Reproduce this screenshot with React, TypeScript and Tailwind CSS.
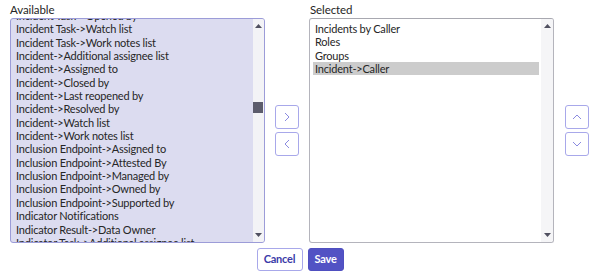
import React from "react";

const available = [
  "Incident Task->Opened by",
  "Incident Task->Watch list",
  "Incident Task->Work notes list",
  "Incident->Additional assignee list",
  "Incident->Assigned to",
  "Incident->Closed by",
  "Incident->Last reopened by",
  "Incident->Resolved by",
  "Incident->Watch list",
  "Incident->Work notes list",
  "Inclusion Endpoint->Assigned to",
  "Inclusion Endpoint->Attested By",
  "Inclusion Endpoint->Managed by",
  "Inclusion Endpoint->Owned by",
  "Inclusion Endpoint->Supported by",
  "Indicator Notifications",
  "Indicator Result->Data Owner",
  "Indicator Task->Additional assignee list",
];

const selected = ["Incidents by Caller", "Roles", "Groups", "Incident->Caller"];

function UpTri() {
  return (
    <svg width="7" height="4" viewBox="0 0 7 4">
      <path d="M0 4 L3.5 0 L7 4 Z" fill="#505060" />
    </svg>
  );
}
function DownTri() {
  return (
    <svg width="7" height="4" viewBox="0 0 7 4">
      <path d="M0 0 L3.5 4 L7 0 Z" fill="#505060" />
    </svg>
  );
}

function Chevron({ dir }: { dir: "left" | "right" | "up" | "down" }) {
  const paths: Record<string, string> = {
    right: "M4 2 L8 6 L4 10",
    left: "M8 2 L4 6 L8 10",
    up: "M2 8 L6 4 L10 8",
    down: "M2 4 L6 8 L10 4",
  };
  return (
    <svg width="12" height="12" viewBox="0 0 12 12" fill="none">
      <path d={paths[dir]} stroke="#8a8ae0" strokeWidth="1" />
    </svg>
  );
}

function IconBtn({ dir }: { dir: "left" | "right" | "up" | "down" }) {
  return (
    <button className="w-[24px] h-[24px] flex items-center justify-center rounded-[3px] border border-[#a8a8ea] bg-white">
      <Chevron dir={dir} />
    </button>
  );
}

export default function App() {
  return (
    <div
      className="w-[602px] h-[274px] bg-white text-[#262626]"
      style={{ fontFamily: "Lato, 'Open Sans', sans-serif" }}
    >
      <div className="flex pl-[10px] pt-[2px]">
        {/* Available */}
        <div className="flex flex-col w-[255px]">
          <div className="text-[11.5px] tracking-[-0.1px] leading-[16px] h-[16px]">Available</div>
          <div className="h-[225px] flex rounded-[3px] border border-[#9c9cd8] bg-[#dcdcf0] overflow-hidden">
            <div className="flex-1 overflow-hidden pl-[5px]">
              <div className="mt-[-10px] text-[11px] tracking-[-0.2px] leading-[13.35px]">
                {available.map((t) => (
                  <div key={t} className="whitespace-nowrap">
                    {t}
                  </div>
                ))}
              </div>
            </div>
            <div className="w-[11px] bg-[#f3f3f6] flex flex-col items-center justify-between py-[5px] relative">
              <UpTri />
              <div className="absolute left-[0px] top-[83px] w-[10px] h-[11px] bg-[#5c5c6c]" />
              <DownTri />
            </div>
          </div>
        </div>

        {/* Move buttons */}
        <div className="flex flex-col justify-center gap-[3px] ml-[10px] mt-[16px]">
          <IconBtn dir="right" />
          <IconBtn dir="left" />
        </div>

        {/* Selected */}
        <div className="flex flex-col w-[245px] ml-[10px]">
          <div className="text-[11.5px] tracking-[-0.1px] leading-[16px] h-[16px] pl-[1px]">Selected</div>
          <div className="h-[225px] flex rounded-[3px] border border-[#b4b4bc] border-t-[#a8a8b0] bg-white overflow-hidden">
            <div className="flex-1 overflow-hidden pl-[3px] pr-[2px] pt-[3px]">
              <div className="text-[11px] tracking-[-0.2px] leading-[13.35px]">
                {selected.map((t, i) => (
                  <div
                    key={t}
                    className={
                      "whitespace-nowrap pl-[2px] " + (i === 3 ? "bg-[#cccccc]" : "")
                    }
                  >
                    {t}
                  </div>
                ))}
              </div>
            </div>
            <div className="w-[12px] bg-[#f5f5f7] flex flex-col items-center justify-between py-[5px]">
              <UpTri />
              <DownTri />
            </div>
          </div>
        </div>

        {/* Order buttons */}
        <div className="flex flex-col justify-center gap-[3px] ml-[11px] mt-[16px]">
          <IconBtn dir="up" />
          <IconBtn dir="down" />
        </div>
      </div>

      <div className="flex justify-center gap-[5px] mt-[5px] w-[600px]">
        <button className="h-[23px] w-[46px] rounded-[3px] border border-[#a8a8ea] bg-white text-[#3b3ba8] text-[11px] tracking-[-0.2px] font-bold">
          Cancel
        </button>
        <button className="h-[23px] w-[36px] rounded-[3px] border border-[#4f4fc0] bg-[#5252c4] text-white text-[11px] tracking-[-0.2px] font-bold">
          Save
        </button>
      </div>
    </div>
  );
}
